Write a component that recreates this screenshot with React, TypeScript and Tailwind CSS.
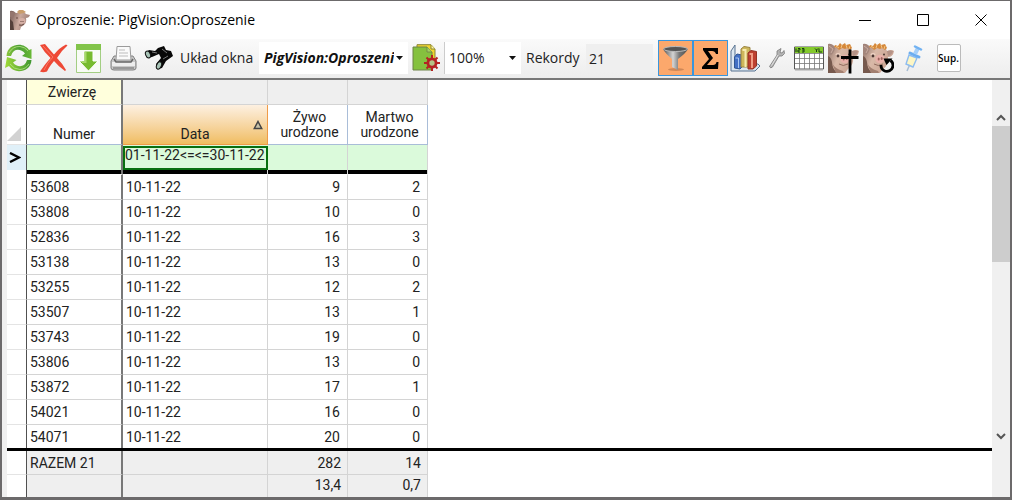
import type { ReactNode } from "react";

const rows: [string, string, number, number][] = [
  ["53608", "10-11-22", 9, 2],
  ["53808", "10-11-22", 10, 0],
  ["52836", "10-11-22", 16, 3],
  ["53138", "10-11-22", 13, 0],
  ["53255", "10-11-22", 12, 2],
  ["53507", "10-11-22", 13, 1],
  ["53743", "10-11-22", 19, 0],
  ["53806", "10-11-22", 13, 0],
  ["53872", "10-11-22", 17, 1],
  ["54021", "10-11-22", 16, 0],
  ["54071", "10-11-22", 20, 0],
];

function ToolButton({ label, children, active, className = "w-[35px]" }: { label: string; children: ReactNode; active?: boolean; className?: string }) {
  return (
    <button
      type="button"
      aria-label={label}
      title={label}
      className={`flex h-9 shrink-0 items-center justify-center ${className} ${active ? "border border-[#3a96dd] bg-[#fca86c]" : ""}`}
    >
      {children}
    </button>
  );
}

function PigHead() {
  return (
    <svg width="20" height="20" viewBox="0 0 20 20" aria-hidden="true">
      <defs>
        <linearGradient id="headShade" x1="0" y1="0" x2="1" y2=".3">
          <stop offset="0" stopColor="#6f5650" />
          <stop offset=".55" stopColor="#c9a89c" />
          <stop offset="1" stopColor="#a08078" />
        </linearGradient>
      </defs>
      <path d="M0 1 Q3 0 6 3 L14 2 L16 4 L20 5 Q19 8 16 8 Q17 12 14 15 L11 17 L10 20 H0 Z" fill="url(#headShade)" />
      <path d="M0 1 L5 3 L3 8 L0 7 Z" fill="#94766e" />
      <path d="M0 9 L3 12 L4 20 H0 Z" fill="#54403a" />
      <path d="M7 2 L9 0 L13 0 L16 2 L14 3 L9 4 Z" fill="#c99d6b" />
      <ellipse cx="12" cy="11" rx="3.500" ry="3" fill="#d6b0a6" />
      <path d="M6 8 H8 M11 11 V12 M13 11 V12 M9 15 Q12 16 14 14" stroke="#664841" fill="none" />
    </svg>
  );
}

function Pig({ variant }: { variant: "cross" | "return" }) {
  return (
    <svg width="31" height="31" viewBox="0 0 31 31" aria-hidden="true">
      <defs>
        <linearGradient id="pigSkin" x1="0" y1="0" x2="1" y2=".4">
          <stop offset="0" stopColor="#8c7067" />
          <stop offset=".45" stopColor="#d9b9a8" />
          <stop offset="1" stopColor="#c7a08f" />
        </linearGradient>
      </defs>
      <path d="M0 1 Q4 0 8 5 L22 4 L24 8 Q28 6 31 8 Q30 14 25 14 Q26 22 20 26 L17 30 H0 Z" fill="url(#pigSkin)" />
      <path d="M0 1 Q4 1 7 5 Q6 10 3 12 L0 10 Z" fill="#a3867c" />
      <path d="M1 3 L5 6 L3 10" stroke="#c9aca1" fill="none" />
      <path d="M0 13 Q3 14 4 19 Q4 25 9 30 H0 Z" fill="#76594d" />
      <path d="M4 20 Q7 26 15 28 L16 30 H8 Z" fill="#a27f70" />
      <path d="M24 8 Q28 7 30 8 Q29 12 25 13 Z" fill="#b49286" />
      <path d="M6 4 L7 2 L10 3 L12 0 L14 2 L17 0 L18 2 L22 1 L24 5 L22 7 L19 5 L17 6 L14 5 L11 7 L9 5 Z" fill="#d5883b" />
      <path d="M8 3 L11 5 M14 2 L13 5 M18 2 L19 5 M22 3 L21 6" stroke="#f2c583" />
      <path d="M8 12 Q10 10 12 12" stroke="#efd3c4" strokeWidth="2" fill="none" />
      <circle cx="10" cy="13" r="1.400" fill="#4c3733" />
      <circle cx="21" cy="11.500" r="1" fill="#4c3733" />
      <ellipse cx="17" cy="16" rx="4.800" ry="4.200" fill="#e8b0a9" />
      <ellipse cx="15.700" cy="16" rx="1" ry="1.500" fill="#9b625c" />
      <ellipse cx="18.700" cy="15.500" rx="1" ry="1.500" fill="#9b625c" />
      <path d="M11 21 Q15 24 20 21" stroke="#936d60" fill="none" />
      {variant === "cross" && <path d="M22 6.500 V30.500 M13 14.500 H30.500" stroke="#000" strokeWidth="2.800" />}
      {variant === "return" && (
        <>
          <path d="M27.500 17.500 A6 6 0 1 1 18 22" fill="none" stroke="#000" strokeWidth="2.800" />
          <path d="M20.500 15.500 H29.500 L23.500 22 Z" fill="#000" />
        </>
      )}
    </svg>
  );
}

function RefreshIcon() {
  return (
    <svg width="28" height="28" viewBox="0 0 28 28" aria-hidden="true">
      <defs>
        <linearGradient id="arrowTop">
          <stop offset="0" stopColor="#8ac53c" />
          <stop offset=".5" stopColor="#4c9e35" />
          <stop offset="1" stopColor="#69b835" />
        </linearGradient>
        <linearGradient id="arrowBottom">
          <stop offset="0" stopColor="#a0da38" />
          <stop offset="1" stopColor="#3f9632" />
        </linearGradient>
      </defs>
      <path d="M1.500 12 C2 4 8 .8 14 .8 C18 .8 22 3 24 6 L26.500 5 L26.500 15 L17 12 L20 9.500 C17 5.500 12 5 9 7 Q7 8.500 6 12 Z" fill="url(#arrowTop)" />
      <path d="M26.500 16 C26 24 20 27.200 14 27.200 C10 27.200 6 25 4 22 L0 24 L2 13 L11.500 16 L8 18.500 C11 22.500 16 23 19 21 Q21 19.500 22 16 Z" fill="url(#arrowBottom)" />
      <path d="M4 9 Q8 2 15 2.500 Q20 3 23 7 M5 20 Q9 25.500 15 25.500 Q21 25 24 20" stroke="#b7e389" strokeWidth=".8" fill="none" />
    </svg>
  );
}

function DeleteIcon() {
  return (
    <svg width="28" height="30" viewBox="0 0 28 30" aria-hidden="true">
      <path d="M0 2 L5 1 Q9 6 14 11.500 Q19 5 26 1.500 L27.500 2.500 Q21 8 17 15 Q22 20 26 27 L25 28 Q18 23 14 18 Q9 24 7 28.500 Q3 30 0 28.500 Q5 21 10.500 15 Q4 9 0 2 Z" fill="#ee4936" />
      <path d="M3 3 L13 14 Q7 20 4 27" stroke="#f97867" fill="none" />
    </svg>
  );
}

function DownloadIcon() {
  return (
    <svg width="25" height="29" viewBox="0 0 25 29" aria-hidden="true">
      <path d="M.5 .5 H24.500 V28.500 H.5 Z" fill="#f8fbf5" stroke="#a3ce83" />
      <path d="M0 0 H25 V6 H0 Z" fill="#82c44a" />
      <path d="M8 7 H17 V17 H22 L12.500 27 L3 17 H8 Z" fill="#77bb2f" stroke="#fff" />
      <path d="M9.500 8 V18 H6" stroke="#a7d96a" strokeWidth="2" fill="none" />
    </svg>
  );
}

function PrinterIcon() {
  return (
    <svg width="27" height="27" viewBox="0 0 27 27" aria-hidden="true">
      <path d="M4 11 L23 11 L26 16 V23 Q26 25 23 25 H4 Q1 25 1 23 V16 Z" fill="#c8c8c8" stroke="#808080" />
      <path d="M7 1.500 H20 L21 15 H6 Z" fill="#fafafa" stroke="#9b9b9b" />
      <path d="M9 5 H15 M9 8 H18 M9 11 H18" stroke="#bcbcbc" />
      <path d="M2 17 H25 V21 H2 Z" fill="#eee" />
      <path d="M4 14 L6 17 H21 L23 14" stroke="#666" strokeWidth="1.500" fill="none" />
      <path d="M3 23 H24" stroke="#999" strokeWidth="2" />
    </svg>
  );
}

function BinocularsIcon() {
  return (
    <svg width="30" height="24" viewBox="0 0 30 24" aria-hidden="true">
      <path d="M1 7 L5 4 L11 5 L14 2 L20 0 L22 4 L27 5 L29 10 L22 15 L18 22 L13 23 L12 18 L17 12 L15 8 L8 11 L3 12 Z" fill="#080808" />
      <ellipse cx="4" cy="8.500" rx="2.300" ry="3.600" transform="rotate(-25 4 8.500)" fill="#a8c4b7" stroke="#111" />
      <ellipse cx="15" cy="19.500" rx="2.300" ry="3.800" transform="rotate(25 15 19.500)" fill="#a8c4b7" stroke="#111" />
      <path d="M8 6 L13 7 M18 3 L23 7 M19 13 L24 10" stroke="#777" />
    </svg>
  );
}

function LayoutIcon() {
  return (
    <svg width="28" height="28" viewBox="0 0 28 28" aria-hidden="true">
      <path d="M5 .7 H19 L23 5 V22 H5 Z" fill="#f0d62f" stroke="#8b8532" />
      <path d="M19 1 V5 H23" fill="#fff7a1" stroke="#8b8532" />
      <path d="M1 3 H15 L20 8 V26 H1 Z" fill="#85c13e" stroke="#6d8247" />
      <path d="M15 3 V8 H20" fill="#a4d45f" stroke="#6d8247" strokeWidth=".8" />
      <g stroke="#b52323" strokeWidth="2">
        <path d="M20 11 V27 M12 19 H28 M14.500 13.500 L25.500 24.500 M25.500 13.500 L14.500 24.500" />
        <circle cx="20" cy="19" r="4.500" fill="#b52323" />
      </g>
      <circle cx="20" cy="19" r="2.700" fill="#b5c387" />
    </svg>
  );
}

function FunnelIcon() {
  return (
    <svg width="27" height="27" viewBox="0 0 27 27" aria-hidden="true">
      <defs>
        <linearGradient id="metal">
          <stop offset="0" stopColor="#4d4d4d" />
          <stop offset=".4" stopColor="#d4d4d4" />
          <stop offset=".65" stopColor="#777" />
          <stop offset="1" stopColor="#4d4d4d" />
        </linearGradient>
      </defs>
      <ellipse cx="14" cy="24.500" rx="8" ry="1.500" fill="#cf8757" />
      <path d="M1 4 Q3 8 10 14 V22 L16 25 V14 Q24 8 26 4 Z" fill="url(#metal)" />
      <ellipse cx="13.500" cy="4" rx="12" ry="2.500" fill="#555" stroke="#bbb" />
    </svg>
  );
}

function SigmaIcon() {
  return (
    <svg width="17" height="21" viewBox="0 0 17 21" aria-hidden="true">
      <path d="M1 0 H16 V6 H14 Q13 3 10 3 H6 L11 10 L5 17 H11 Q14 17 14.500 14 H16.500 L16 21 H0 V19 L7 11 L1 2 Z" fill="#000" />
    </svg>
  );
}

function ChartIcon() {
  return (
    <svg width="31" height="29" viewBox="0 0 31 29" aria-hidden="true">
      <path d="M1 7 L5 1 V20 H28 L30 22 L25 27 H1 Z" fill="#dce7f0" stroke="#597391" />
      <path d="M4.500 13 L7 10 L12 11 V23 L10 25 L4.500 24 Z" fill="#4471c5" stroke="#315793" />
      <path d="M5.500 14 H8.500 V24" stroke="#a8c7f3" fill="none" />
      <path d="M11 5 L14 2.500 L20 3.500 V23 H11 Z" fill="#cdb75b" stroke="#9a8441" />
      <path d="M12.500 6 H15.500 V23" stroke="#f7ebaf" strokeWidth="2" fill="none" />
      <path d="M18 9 L21 6.500 L26.500 7.500 V22 L23 25 H18 Z" fill="#bd4030" stroke="#943224" />
      <path d="M19.500 10 H22 V24" stroke="#f09c84" strokeWidth="2" fill="none" />
    </svg>
  );
}

function WrenchIcon() {
  return (
    <svg width="16" height="21" viewBox="0 0 16 21" aria-hidden="true">
      <path d="M12 .5 L11 4.500 L13 5 L15 2.500 L15.500 5.500 L13 8 L10 8 L3.500 19 Q1.500 21 .5 18.500 L8 7 L8 3 Z" fill="#b4b4b4" stroke="#7b7b7b" strokeWidth=".8" />
      <path d="M2.500 17.500 L9 7" stroke="#e3e3e3" />
    </svg>
  );
}

function CalendarIcon() {
  return (
    <svg width="30" height="25" viewBox="0 0 30 25" aria-hidden="true">
      <path d="M.5 1 H29.500 V23 H.5 Z" fill="#fff" stroke="#555" />
      <path d="M1 1 H29 V7 H1 Z" fill="#84ca2d" />
      <path d="M1 7.500 H29 M1 12.500 H29 M1 17.500 H29 M5.500 7 V23 M10.500 7 V23 M15.500 7 V23 M20.500 7 V23 M25.500 7 V23" stroke="#777" strokeWidth=".8" />
      <path d="M2 2.500 V6 M4 2.500 H6 V4 H4 V6 H6 M8 2.500 H10 V6 H8 M8 4 H10 M21 2.500 L22.500 4 V6 M24 2.500 L22.500 4 M25 2.500 V6 H28" stroke="#173d10" fill="none" />
      <path d="M1 24 H29" stroke="#aaa" />
    </svg>
  );
}

function SyringeIcon() {
  return (
    <svg width="20" height="27" viewBox="0 0 20 27" aria-hidden="true">
      <path d="M3 26 L6 19" stroke="#a6bdd4" strokeWidth="1.500" />
      <path d="M5 10 L13 13 L9 22 L2 19 Z" fill="#fdf6c4" stroke="#8dbcf0" strokeWidth="1.400" />
      <path d="M6 8 L15 12" stroke="#6aadf0" strokeWidth="3" strokeLinecap="round" />
      <path d="M11 9 L14 3" stroke="#a5cff9" strokeWidth="4" />
      <path d="M11 1.500 L17 4.500" stroke="#72b2f2" strokeWidth="2.500" strokeLinecap="round" />
    </svg>
  );
}

function SelectArrow() {
  return (
    <svg className="pointer-events-none absolute right-[5px] top-[14px]" width="7" height="4" viewBox="0 0 7 4" aria-hidden="true">
      <path d="M0 0 H7 L3.500 4 Z" fill="#111" />
    </svg>
  );
}

function Columns() {
  return (
    <colgroup>
      <col className="w-5" />
      <col className="w-24" />
      <col className="w-[145px]" />
      <col className="w-20" />
      <col className="w-20" />
    </colgroup>
  );
}

const gutter = "border-r border-b border-r-[#505050] border-b-[#e4e4e4] bg-white";
const first = "border-r-2 border-b border-r-[#787878] border-b-[#d4d4d4]";
const cell = "border-r border-b border-[#d4d4d4]";

export default function App() {
  return (
    <div className="flex h-screen flex-col overflow-hidden border-x-2 border-t border-b-[3px] border-[#6c6a6b] bg-white font-['Roboto',sans-serif] text-sm text-[#222]">
      <header className="flex h-[38px] shrink-0 items-center bg-white pl-2">
        <PigHead />
        <h1 className="ml-[6px] flex-1 font-['Open_Sans',sans-serif] text-sm text-black">Oproszenie: PigVision:Oproszenie</h1>
        <button type="button" aria-label="Minimalizuj" className="flex h-full w-[58px] items-center justify-center">
          <svg width="12" height="12" aria-hidden="true"><path d="M0 6.500 H12" stroke="#000" /></svg>
        </button>
        <button type="button" aria-label="Maksymalizuj" className="flex h-full w-[58px] items-center justify-center">
          <svg width="12" height="12" aria-hidden="true"><path d="M.5 .5 H11.500 V11.500 H.5 Z" fill="none" stroke="#000" /></svg>
        </button>
        <button type="button" aria-label="Zamknij" className="flex h-full w-[58px] items-center justify-center">
          <svg width="12" height="12" aria-hidden="true"><path d="M.5 .5 L11.500 11.500 M11.500 .5 L.5 11.500" stroke="#000" /></svg>
        </button>
      </header>

      <div role="toolbar" aria-label="Narzędzia" className="flex h-[41px] shrink-0 items-center border-b-2 border-[#777] bg-linear-to-b from-[#fafafa] to-[#ededed] pb-px font-['Open_Sans',sans-serif] text-sm">
        <ToolButton label="Odśwież" className="w-[34px]"><RefreshIcon /></ToolButton>
        <ToolButton label="Usuń"><DeleteIcon /></ToolButton>
        <ToolButton label="Pobierz"><DownloadIcon /></ToolButton>
        <ToolButton label="Drukuj"><PrinterIcon /></ToolButton>
        <ToolButton label="Szukaj"><BinocularsIcon /></ToolButton>
        <label htmlFor="layout" className="ml-1 w-[79px] shrink-0 whitespace-nowrap">Układ okna</label>
        <div className="relative h-8 w-[149px] shrink-0 bg-white">
          <select id="layout" className="h-8 w-full appearance-none overflow-hidden bg-white pr-[14px] pl-[5px] font-bold text-[#111] italic">
            <option>PigVision:Oproszenie</option>
          </select>
          <SelectArrow />
        </div>
        <ToolButton label="Ustawienia układu"><LayoutIcon /></ToolButton>
        <div className="relative ml-[1px] h-8 w-[77px] shrink-0 border-l border-[#ccc] bg-white">
          <select aria-label="Powiększenie" className="h-8 w-full appearance-none bg-white pr-3 pl-1">
            <option>100%</option>
          </select>
          <SelectArrow />
        </div>
        <label htmlFor="records" className="ml-[5px] w-[60px] shrink-0">Rekordy</label>
        <input id="records" readOnly value="21" className="mr-[5px] h-7 w-[67px] shrink-0 bg-[#efefef] pl-[3px]" />
        <ToolButton label="Filtr" active><FunnelIcon /></ToolButton>
        <ToolButton label="Suma" active><SigmaIcon /></ToolButton>
        <ToolButton label="Wykres"><ChartIcon /></ToolButton>
        <ToolButton label="Narzędzia" className="w-7"><WrenchIcon /></ToolButton>
        <ToolButton label="Kalendarz"><CalendarIcon /></ToolButton>
        <ToolButton label="Padnięcie"><Pig variant="cross" /></ToolButton>
        <ToolButton label="Powrót"><Pig variant="return" /></ToolButton>
        <ToolButton label="Leczenie"><SyringeIcon /></ToolButton>
        <ToolButton label="Sup.">
          <span className="flex h-7 w-6 items-center justify-center rounded-xs border border-[#bbb] bg-white text-[10px] font-semibold text-black">Sup.</span>
        </ToolButton>
      </div>

      <main className="flex min-h-0 flex-1">
        <div className="w-[5px] shrink-0 bg-[#f0f0f0]" />
        <div className="flex min-w-0 flex-1 flex-col">
          <div className="min-h-0 flex-1 overflow-hidden">
            <table id="grid" className="w-[421px] table-fixed border-separate border-spacing-0">
              <Columns />
              <thead className="font-normal">
                <tr className="h-[25px]">
                  <th className={gutter} />
                  <th className={`${first} bg-[#ffffdc] p-0 pr-1 font-normal`}>Zwierzę</th>
                  <th className={`${cell} bg-[#efefef]`} />
                  <th className={`${cell} bg-[#efefef]`} />
                  <th className={`${cell} bg-[#efefef]`} />
                </tr>
                <tr className="h-10">
                  <th className={`${gutter} p-0 align-bottom`}>
                    <svg className="mb-[3px]" width="14" height="14" aria-hidden="true"><path d="M14 0 V14 H0 Z" fill="#d2d2d2" /></svg>
                  </th>
                  <th className="border-r-2 border-b border-r-[#787878] border-b-[#a9bdd8] p-0 align-bottom font-normal">Numer</th>
                  <th className="border-r border-b border-[#ef9b48] bg-linear-to-b from-[#fdf0e1] to-[#f0bd60] p-0 align-bottom font-normal">
                    <div className="grid grid-cols-[1fr_auto_1fr] items-end">
                      <span className="col-start-2">Data</span>
                      <svg className="mr-1 mb-[14px] justify-self-end" width="10" height="10" aria-label="Rosnąco"><path d="M5 1.500 L8.700 8.500 H1.300 Z" fill="#c9c3a8" stroke="#444" strokeWidth="1.500" /></svg>
                    </div>
                  </th>
                  <th className="border-r border-b border-[#a9bdd8] p-0 pl-1 leading-[15px] font-normal">Żywo<br />urodzone</th>
                  <th className="border-r border-b border-[#a9bdd8] p-0 pl-1 leading-[15px] font-normal">Martwo<br />urodzone</th>
                </tr>
                <tr className="h-[25px] bg-[#dbfadb]">
                  <td className="border-r border-[#505050] bg-[#e0f0f8] p-0 pl-[2px]">
                    <svg width="12" height="11" aria-label="Bieżący wiersz"><path d="M1 1 L10 5.500 L1 10" fill="none" stroke="#000" strokeWidth="2.400" /></svg>
                  </td>
                  <td className="border-r-2 border-[#787878] p-0" />
                  <td className="p-0">
                    <input aria-label="Filtr daty" defaultValue="01-11-22<=<=30-11-22" className="block h-6 w-full border-2 border-[#087010] bg-transparent pb-[6px] text-[#222]" />
                  </td>
                  <td className="border-r border-[#d4d4d4] p-0" />
                  <td className="border-r border-[#d4d4d4] p-0" />
                </tr>
                <tr className="h-[5px]" aria-hidden="true">
                  <td className="border-r border-[#505050] p-0" />
                  <td className="border-r-2 border-b border-r-[#787878] border-b-white bg-black p-0" />
                  <td className="border-r border-b border-r-[#d4d4d4] border-b-white bg-black p-0" />
                  <td className="border-r border-b border-r-[#d4d4d4] border-b-white bg-black p-0" />
                  <td className="border-r border-b border-r-[#d4d4d4] border-b-white bg-black p-0" />
                </tr>
              </thead>
              <tbody>
                {rows.map(([id, date, alive, dead]) => (
                  <tr key={id} className="h-[25px]">
                    <td className={gutter} />
                    <td className={`${first} p-0 pl-[3px]`}>{id}</td>
                    <td className={`${cell} p-0 pl-[3px]`}>{date}</td>
                    <td className={`${cell} p-0 pr-[7px] text-right`}>{alive}</td>
                    <td className={`${cell} p-0 pr-[7px] text-right`}>{dead}</td>
                  </tr>
                ))}
              </tbody>
            </table>
          </div>
          <div className="shrink-0 border-t-[3px] border-black">
            <table aria-label="Podsumowanie" className="w-[421px] table-fixed border-separate border-spacing-0">
              <Columns />
              <tbody className="bg-[#efefef]">
                <tr className="h-6">
                  <td className={gutter} />
                  <td className={`${first} p-0 pl-[3px]`}>RAZEM 21</td>
                  <td className={cell} />
                  <td className={`${cell} p-0 pr-[6px] text-right`}>282</td>
                  <td className={`${cell} p-0 pr-[6px] text-right`}>14</td>
                </tr>
                <tr className="h-[22px]">
                  <td className="border-r border-[#505050] bg-white p-0" />
                  <td className="border-r-2 border-[#787878] p-0" />
                  <td className="border-r border-[#d4d4d4] p-0" />
                  <td className="border-r border-[#d4d4d4] p-0 pr-[6px] pb-[2px] text-right">13,4</td>
                  <td className="border-r border-[#d4d4d4] p-0 pr-[6px] pb-[2px] text-right">0,7</td>
                </tr>
              </tbody>
            </table>
          </div>
        </div>
        <div className="flex w-[18px] shrink-0 flex-col items-center bg-[#f0f0f0] pt-[29px] pb-[52px]" role="scrollbar" aria-controls="grid" aria-valuenow={0} aria-orientation="vertical">
          <button type="button" aria-label="W górę" className="flex h-[17px] w-full items-center justify-center">
            <svg width="10" height="7" aria-hidden="true"><path d="M1 6 L5 2 L9 6" fill="none" stroke="#555" strokeWidth="2" /></svg>
          </button>
          <div className="h-[136px] w-full bg-[#cdcdcd]" />
          <div className="flex-1" />
          <button type="button" aria-label="W dół" className="flex h-[17px] w-full items-center justify-center">
            <svg width="10" height="7" aria-hidden="true"><path d="M1 1 L5 5 L9 1" fill="none" stroke="#555" strokeWidth="2" /></svg>
          </button>
        </div>
      </main>
    </div>
  );
}
